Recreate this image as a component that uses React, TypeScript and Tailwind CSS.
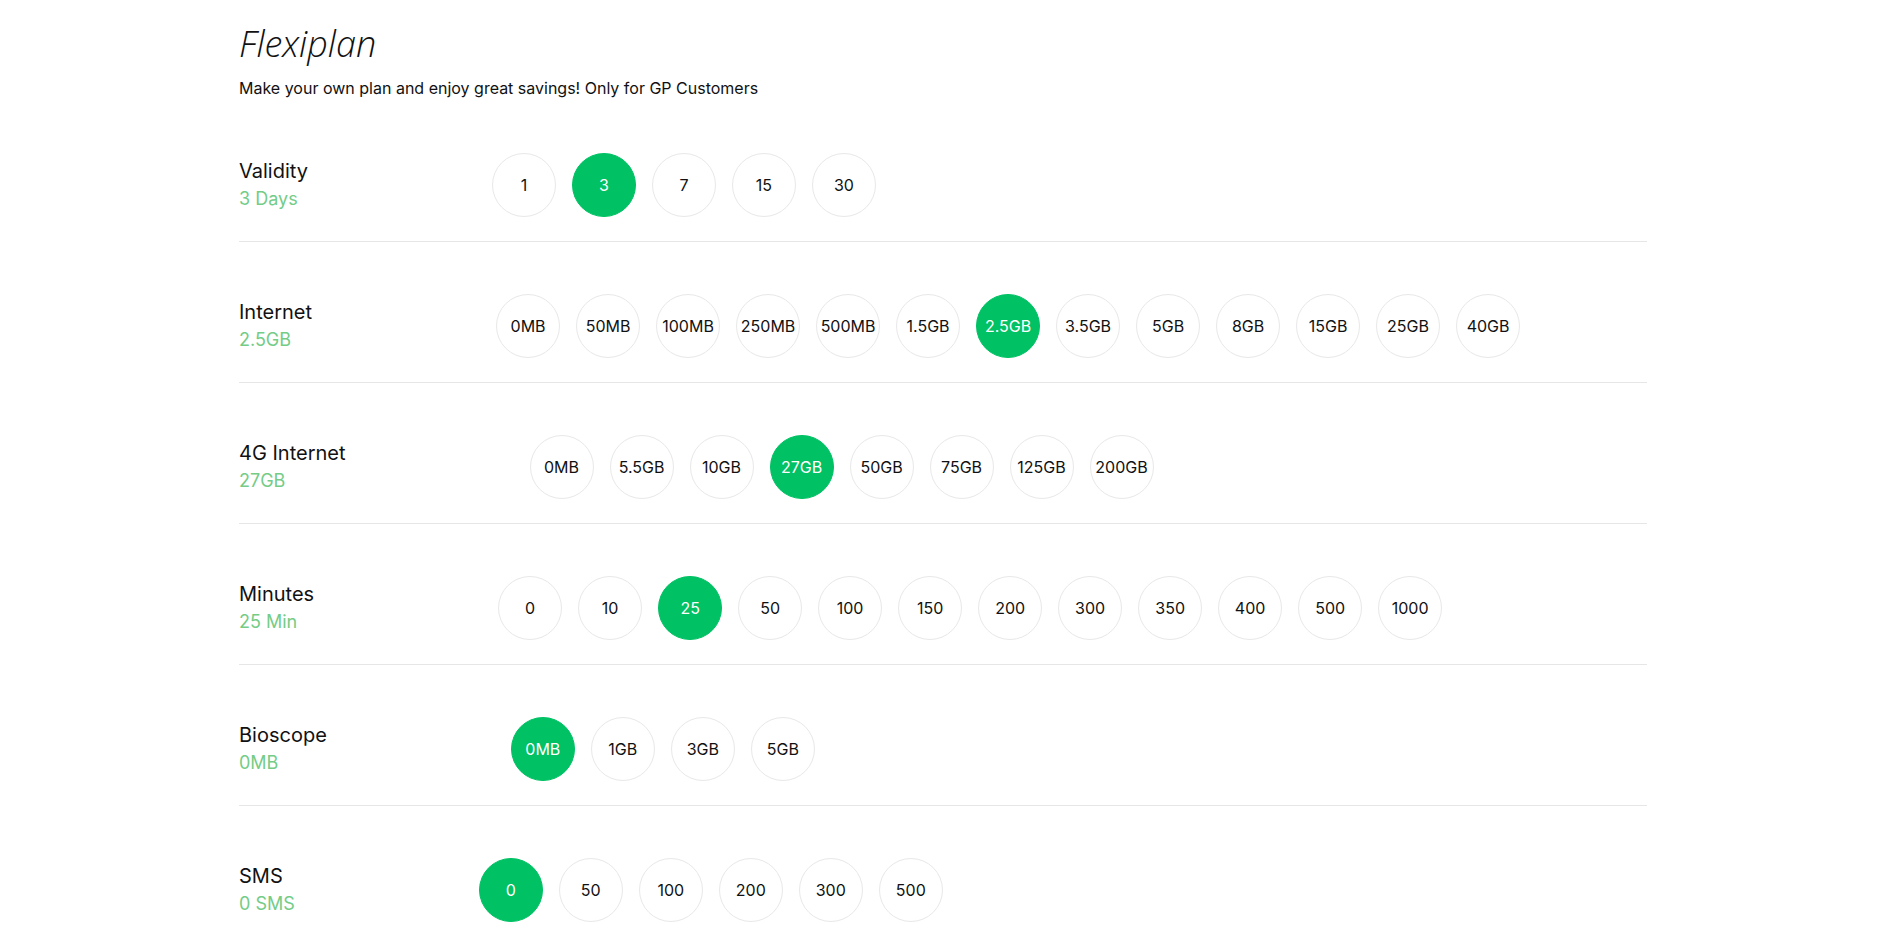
import React from "react";

type Row = { label: string; sub: string; options: string[]; selected: string };

const rows: Row[] = [
  { label: "Validity", sub: "3 Days", options: ["1", "3", "7", "15", "30"], selected: "3" },
  {
    label: "Internet",
    sub: "2.5GB",
    options: ["0MB", "50MB", "100MB", "250MB", "500MB", "1.5GB", "2.5GB", "3.5GB", "5GB", "8GB", "15GB", "25GB", "40GB"],
    selected: "2.5GB",
  },
  {
    label: "4G Internet",
    sub: "27GB",
    options: ["0MB", "5.5GB", "10GB", "27GB", "50GB", "75GB", "125GB", "200GB"],
    selected: "27GB",
  },
  {
    label: "Minutes",
    sub: "25 Min",
    options: ["0", "10", "25", "50", "100", "150", "200", "300", "350", "400", "500", "1000"],
    selected: "25",
  },
  { label: "Bioscope", sub: "0MB", options: ["0MB", "1GB", "3GB", "5GB"], selected: "0MB" },
  { label: "SMS", sub: "0 SMS", options: ["0", "50", "100", "200", "300", "500"], selected: "0" },
];

export default function App() {
  return (
    <div className="min-h-screen bg-white text-[#111111]" style={{ fontFamily: "Inter, 'Noto Sans', sans-serif" }}>
      <div className="ml-[239px] w-[1408px]">
        <h1
          className="pt-[23px] text-[36px] leading-[42px] font-light italic text-[#111111]"
          style={{ fontFamily: "'Open Sans', Lato, sans-serif" }}
        >
          Flexiplan
        </h1>
        <p className="mt-[11px] text-[16px] leading-[24px]">
          Make your own plan and enjoy great savings! Only for GP Customers
        </p>
        <div className="mt-[1px]">
          {rows.map((row, i) => (
            <div
              key={row.label}
              className={
                "flex items-center pt-[52px] pb-[24px] " +
                (i < rows.length - 1 ? "border-b border-[#e6e6e6]" : "")
              }
            >
              <div className="flex flex-col">
                <span className="text-[20px] leading-[27px] text-[#111111]">{row.label}</span>
                <span className="text-[18px] leading-[27px] text-[#74cc86]">{row.sub}</span>
              </div>
              <div className="ml-[184px] flex gap-[16px]">
                {row.options.map((opt) => {
                  const sel = opt === row.selected;
                  return (
                    <div
                      key={opt}
                      className={
                        "flex h-[64px] w-[64px] items-center justify-center rounded-full border text-[16px] " +
                        (sel
                          ? "border-[#00c163] bg-[#00c163] text-white"
                          : "border-[#e8e8e8] bg-white text-[#111111]")
                      }
                    >
                      {opt}
                    </div>
                  );
                })}
              </div>
            </div>
          ))}
        </div>
      </div>
    </div>
  );
}
